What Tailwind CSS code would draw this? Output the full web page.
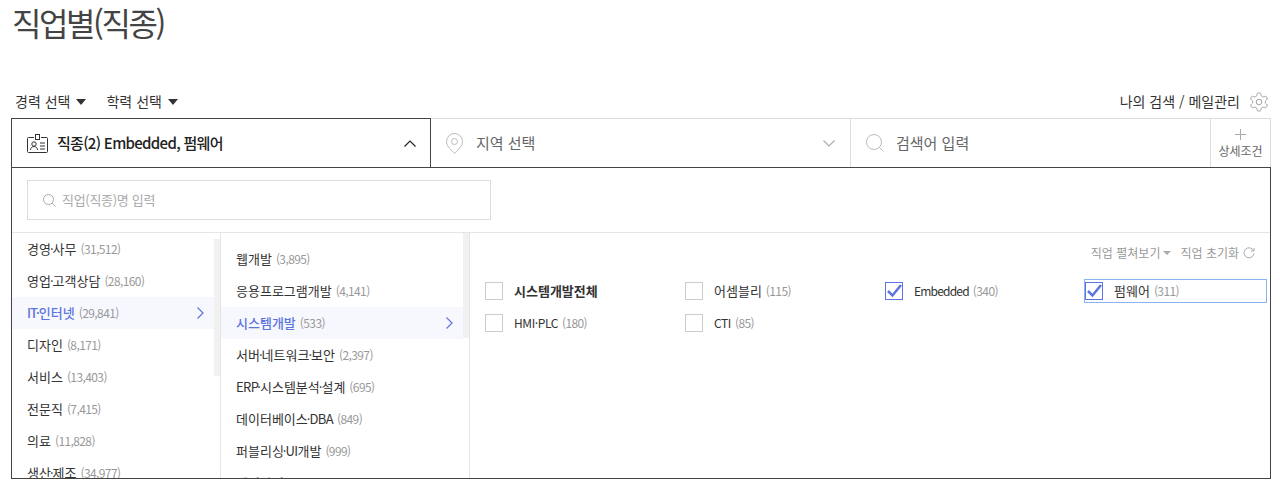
<!DOCTYPE html>
<html lang="ko">
<head>
    <meta charset="UTF-8">
    <title>직업별(직종)</title>
    <script src="https://cdn.jsdelivr.net/npm/@tailwindcss/browser@4"></script>
</head>
<body class="bg-white h-[483px] overflow-hidden font-['Noto_Sans_CJK_KR','Liberation_Sans',sans-serif] text-[#333]">

    <h1 class="h-[90px] pl-[12px] text-[32px] leading-[44px] font-normal tracking-[-2.4px] text-[#444]">직업별(직종)</h1>

    <!-- filters -->
    <div class="h-[28px] w-[1270px] pl-[15px] pb-[5px] flex items-center justify-between text-[14px] text-[#333]">
        <div class="flex items-center">
            <span>경력 선택</span>
            <span class="ml-[6px] mr-[20px] w-0 h-0 border-x-[5px] border-x-transparent border-t-[6px] border-t-[#333]"></span>
            <span>학력 선택</span>
            <span class="ml-[6px] w-0 h-0 border-x-[5px] border-x-transparent border-t-[6px] border-t-[#333]"></span>
        </div>
        <div class="flex items-center">
            <span>나의 검색 / 메일관리</span>
            <svg class="ml-[8px]" width="22" height="22" viewBox="0 0 24 24" fill="none" stroke="#999" stroke-width="1"><path d="M12.22 2h-.44a2 2 0 0 0-2 2v.18a2 2 0 0 1-1 1.730l-.43.25a2 2 0 0 1-2 0l-.15-.08a2 2 0 0 0-2.730.73l-.22.38a2 2 0 0 0 .73 2.730l.15.1a2 2 0 0 1 1 1.720v.51a2 2 0 0 1-1 1.740l-.15.09a2 2 0 0 0-.73 2.730l.22.38a2 2 0 0 0 2.730.73l.15-.08a2 2 0 0 1 2 0l.43.25a2 2 0 0 1 1 1.730V20a2 2 0 0 0 2 2h.44a2 2 0 0 0 2-2v-.18a2 2 0 0 1 1-1.730l.43-.25a2 2 0 0 1 2 0l.15.08a2 2 0 0 0 2.730-.73l.22-.39a2 2 0 0 0-.73-2.730l-.15-.08a2 2 0 0 1-1-1.740v-.5a2 2 0 0 1 1-1.740l.15-.09a2 2 0 0 0 .73-2.730l-.22-.38a2 2 0 0 0-2.730-.73l-.15.08a2 2 0 0 1-2 0l-.43-.25a2 2 0 0 1-1-1.730V4a2 2 0 0 0-2-2z"/><circle cx="12" cy="12" r="3"/></svg>
        </div>
    </div>

    <!-- search tabs -->
    <div class="flex h-[50px] ml-[11px] w-[1260px] border-b border-[#444] text-[15px]">
        <div class="w-[420px] flex items-center border border-b-0 border-[#444] pl-[15px] pr-[14px] font-medium text-[#222] tracking-[-0.7px]">
            <svg width="21" height="19" viewBox="0 0 21 19" fill="none" stroke="#333" class="mr-[9px]"><path d="M7 3.500H1.500a1 1 0 0 0-1 1v13a1 1 0 0 0 1 1h18a1 1 0 0 0 1-1v-13a1 1 0 0 0-1-1H14"/><rect x="8.500" y=".5" width="4" height="5"/><circle cx="7" cy="10" r="2.200"/><path d="M3.500 16c0-2 1.500-3.500 3.500-3.500s3.500 1.500 3.500 3.500M13 9h5M13 12h5M13 15h5"/></svg>
            <span>직종(2) Embedded, 펌웨어</span>
            <svg class="ml-auto" width="12" height="7" viewBox="0 0 12 7" fill="none" stroke="#222" stroke-width="1.2"><path d="M.5 6.500 6 1l5.500 5.500"/></svg>
        </div>
        <div class="w-[420px] flex items-center border-t border-r border-[#ddd] pl-[15px] pr-[15px] text-[#666]">
            <svg width="17" height="21" viewBox="0 0 17 21" fill="none" stroke="#bbb" class="mr-[13px]"><path d="M8.500 20.500C3.500 15.500.5 12.500.5 8.500a8 8 0 0 1 16 0c0 4-3 7-8 12z"/><circle cx="8.500" cy="8.500" r="3"/></svg>
            <span>지역 선택</span>
            <svg class="ml-auto" width="12" height="7" viewBox="0 0 12 7" fill="none" stroke="#aaa" stroke-width="1.1"><path d="M.5.500 6 6l5.500-5.500"/></svg>
        </div>
        <div class="w-[360px] flex items-center border-t border-r border-[#ddd] pl-[15px] text-[#666]">
            <svg width="18" height="18" viewBox="0 0 18 18" fill="none" stroke="#bbb" class="mr-[12px]"><circle cx="8" cy="8" r="7.500"/><path d="m13.500 13.500 4 4"/></svg>
            <span>검색어 입력</span>
        </div>
        <div class="w-[60px] flex flex-col items-center border-t border-r border-[#ddd] pt-[10px] text-[12px] leading-[16px] text-[#666]">
            <svg width="11" height="11" viewBox="0 0 11 11" stroke="#aaa"><path d="M5.500 0v11M0 5.500h11"/></svg>
            <span class="mt-[3px]">상세조건</span>
        </div>
    </div>

    <!-- panel -->
    <div class="ml-[11px] w-[1260px] h-[311px] border border-t-0 border-[#444] overflow-hidden">
        <div class="h-[65px] pl-[15px] pt-[12px] border-b border-[#e5e5e5]">
            <div class="w-[464px] h-[40px] border border-[#ddd] flex items-center pl-[15px] text-[13px] tracking-[-0.3px] text-[#aaa]">
                <svg width="13" height="13" viewBox="0 0 13 13" fill="none" stroke="#aaa" class="mr-[6px]"><circle cx="5.500" cy="5.500" r="5"/><path d="m9 9 3.500 3.500"/></svg>
                <span>직업(직종)명 입력</span>
            </div>
        </div>

        <div class="flex h-[246px]">
            <!-- first column -->
            <div class="w-[209px] shrink-0 flex border-r border-[#e5e5e5]">
                <ul class="w-[202px] text-[13px]">
                    <li class="h-[32px] pl-[15px] flex items-center">경영<span class="mx-[-1px]">·</span>사무<span class="ml-[4px] text-[12px] tracking-[-0.6px] text-[#999]">(31,512)</span></li>
                    <li class="h-[32px] pl-[15px] flex items-center">영업<span class="mx-[-1px]">·</span>고객상담<span class="ml-[4px] text-[12px] tracking-[-0.6px] text-[#999]">(28,160)</span></li>
                    <li class="h-[32px] pl-[15px] pr-[10px] flex items-center bg-[#f7f8fe] text-[#5b74e0] font-medium"><span class="tracking-[-1px]">IT</span><span class="mx-[-1px]">·</span>인터넷<span class="ml-[4px] text-[12px] tracking-[-0.6px] text-[#999] font-normal">(29,841)</span>
                        <svg class="ml-auto" width="7" height="12" viewBox="0 0 7 12" fill="none" stroke="#5b74e0" stroke-width="1.2"><path d="m.5.500 5.500 5.500-5.500 5.500"/></svg></li>
                    <li class="h-[32px] pl-[15px] flex items-center">디자인<span class="ml-[4px] text-[12px] tracking-[-0.6px] text-[#999]">(8,171)</span></li>
                    <li class="h-[32px] pl-[15px] flex items-center">서비스<span class="ml-[4px] text-[12px] tracking-[-0.6px] text-[#999]">(13,403)</span></li>
                    <li class="h-[32px] pl-[15px] flex items-center">전문직<span class="ml-[4px] text-[12px] tracking-[-0.6px] text-[#999]">(7,415)</span></li>
                    <li class="h-[32px] pl-[15px] flex items-center">의료<span class="ml-[4px] text-[12px] tracking-[-0.6px] text-[#999]">(11,828)</span></li>
                    <li class="h-[32px] pl-[15px] flex items-center">생산<span class="mx-[-1px]">·</span>제조<span class="ml-[4px] text-[12px] tracking-[-0.6px] text-[#999]">(34,977)</span></li>
                </ul>
                <div class="w-[6px] pt-[6px]"><div class="h-[137px] bg-[#f1f1f1]"></div></div>
            </div>

            <!-- second column -->
            <div class="w-[249px] shrink-0 flex border-r border-[#e5e5e5]">
                <ul class="w-[242px] pt-[10px] text-[13px]">
                    <li class="h-[32px] pl-[15px] flex items-center">웹개발<span class="ml-[4px] text-[12px] tracking-[-0.6px] text-[#999]">(3,895)</span></li>
                    <li class="h-[32px] pl-[15px] flex items-center">응용프로그램개발<span class="ml-[4px] text-[12px] tracking-[-0.6px] text-[#999]">(4,141)</span></li>
                    <li class="h-[32px] pl-[15px] pr-[10px] flex items-center bg-[#f7f8fe] text-[#5b74e0] font-medium">시스템개발<span class="ml-[4px] text-[12px] tracking-[-0.6px] text-[#999] font-normal">(533)</span>
                        <svg class="ml-auto" width="7" height="12" viewBox="0 0 7 12" fill="none" stroke="#5b74e0" stroke-width="1.2"><path d="m.5.500 5.500 5.500-5.500 5.500"/></svg></li>
                    <li class="h-[32px] pl-[15px] flex items-center">서버<span class="mx-[-1px]">·</span>네트워크<span class="mx-[-1px]">·</span>보안<span class="ml-[4px] text-[12px] tracking-[-0.6px] text-[#999]">(2,397)</span></li>
                    <li class="h-[32px] pl-[15px] flex items-center"><span class="tracking-[-0.6px]">ERP</span><span class="mx-[-1px]">·</span>시스템분석<span class="mx-[-1px]">·</span>설계<span class="ml-[4px] text-[12px] tracking-[-0.6px] text-[#999]">(695)</span></li>
                    <li class="h-[32px] pl-[15px] flex items-center">데이터베이스<span class="mx-[-1px]">·</span><span class="tracking-[-0.6px]">DBA</span><span class="ml-[4px] text-[12px] tracking-[-0.6px] text-[#999]">(849)</span></li>
                    <li class="h-[32px] pl-[15px] flex items-center">퍼블리싱<span class="mx-[-1px]">·</span><span class="tracking-[-0.6px]">UI</span>개발<span class="ml-[4px] text-[12px] tracking-[-0.6px] text-[#999]">(999)</span></li>
                    <li class="h-[32px] pl-[15px] flex items-center">웹디자인</li>
                </ul>
                <div class="w-[6px]"><div class="h-[105px] bg-[#f1f1f1]"></div></div>
            </div>

            <!-- third column -->
            <div class="flex-1 pl-[15px]">
                <div class="h-[39px] mb-[3px] pr-[15px] flex items-center justify-end text-[12px] text-[#999]">
                    <span>직업 펼쳐보기</span>
                    <span class="ml-[3px] mr-[9px] w-0 h-0 border-x-[4px] border-x-transparent border-t-[4px] border-t-[#aaa]"></span>
                    <span>직업 초기화</span>
                    <svg class="ml-[4px]" width="12" height="12" viewBox="0 0 12 12" fill="none" stroke="#aaa"><path d="M10.500 3.500A5 5 0 1 0 11 6.500M11 1v3H8"/></svg>
                </div>
                <div class="grid grid-cols-[200px_200px_200px_182px] auto-rows-[32px] text-[13px]">
                    <label class="flex items-center"><span class="w-[18px] h-[18px] border border-[#ccc] mr-[11px]"></span><span class="font-semibold text-[#333]">시스템개발전체</span></label>
                    <label class="flex items-center"><span class="w-[18px] h-[18px] border border-[#ccc] mr-[11px]"></span>어셈블리<span class="ml-[4px] text-[12px] tracking-[-0.6px] text-[#999]">(115)</span></label>
                    <label class="flex items-center text-[12px] tracking-[-0.8px]"><span class="w-[18px] h-[18px] border border-[#5b74e0] mr-[11px] flex items-center justify-center"><svg width="16" height="14" viewBox="0 0 16 14" fill="none" stroke="#5b74e0" stroke-width="2.500"><path d="m2 7 4.500 4.500L15 1"/></svg></span>Embedded<span class="ml-[4px] tracking-[-0.6px] text-[#999]">(340)</span></label>
                    <label class="flex items-center relative"><span class="w-[18px] h-[18px] border border-[#5b74e0] mr-[11px] flex items-center justify-center"><svg width="16" height="14" viewBox="0 0 16 14" fill="none" stroke="#5b74e0" stroke-width="2.500"><path d="m2 7 4.500 4.500L15 1"/></svg></span>펌웨어<span class="ml-[4px] text-[12px] tracking-[-0.6px] text-[#999]">(311)</span>
                        <span class="absolute left-[-1px] top-[4px] w-[183px] h-[24px] border border-[#8ab4f0]"></span></label>
                    <label class="flex items-center text-[12px] tracking-[-0.4px]"><span class="w-[18px] h-[18px] border border-[#ccc] mr-[11px]"></span>HMI·PLC<span class="ml-[4px] tracking-[-0.6px] text-[#999]">(180)</span></label>
                    <label class="flex items-center text-[12px] tracking-[-0.4px]"><span class="w-[18px] h-[18px] border border-[#ccc] mr-[11px]"></span>CTI<span class="ml-[4px] tracking-[-0.6px] text-[#999]">(85)</span></label>
                </div>
            </div>
        </div>
    </div>

</body>
</html>
